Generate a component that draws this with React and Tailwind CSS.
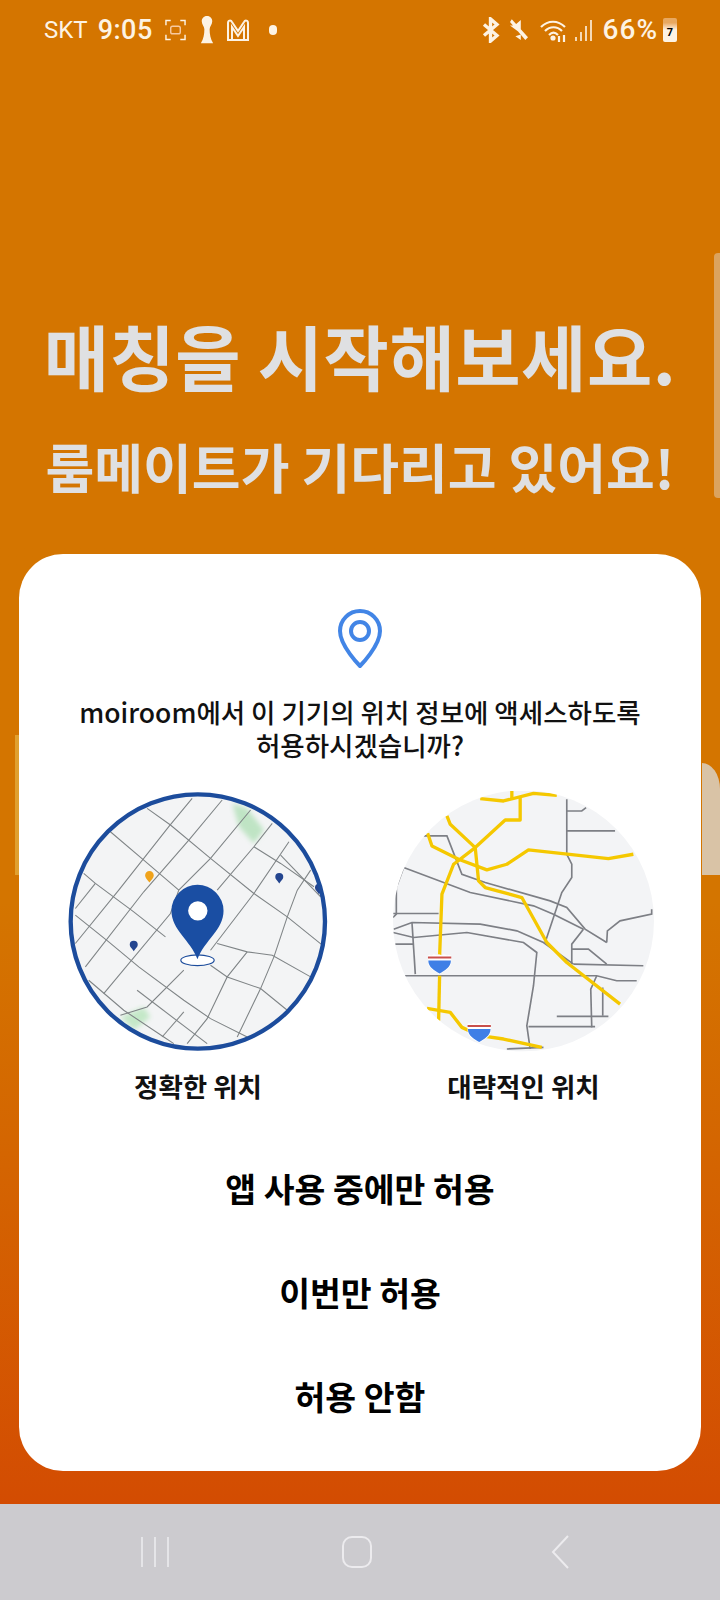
const ko = { fontFamily: '"Noto Sans CJK KR", "Noto Sans", sans-serif' }

function StatusBar() {
  return (
    <div className="h-[60px] pl-[44px] pr-[43px] flex items-center justify-between text-[#fdf3e4]" style={{ fontFamily: 'Roboto, sans-serif' }}>
      <div className="flex items-center">
        <span className="text-[24px]">SKT</span>
        <span className="font-medium ml-[10px] text-[27px] tracking-[0.5px]">9:05</span>
        <svg width="21" height="22" viewBox="0 0 22 22" fill="none" stroke="currentColor" strokeWidth="1.5" className="ml-[12px]">
          <path d="M1 6V1h5M16 1h5v5M21 16v5h-5M6 21H1v-5" />
          <rect x="6" y="7" width="10" height="8" rx="2" stroke="#f7c9a0" />
        </svg>
        <svg width="14" height="30" viewBox="0 0 16 34" fill="currentColor" className="ml-[14px]">
          <path d="M8 1c4 0 6 3 6 6 0 4-3 6-3 9 0 6 1 11 4 16H1c3-5 4-10 4-16 0-3-3-5-3-9 0-3 2-6 6-6z" />
        </svg>
        <svg width="25" height="24" viewBox="0 0 25 24" fill="none" stroke="currentColor" strokeWidth="2" className="ml-[12px]">
          <path d="M2 22V5c0-3 3-3 4-1l6 9 6-9c1-2 4-2 4 1v17zM6 22V9l6 9 6-9v13" />
        </svg>
        <span className="w-[8px] h-[10px] rounded-full bg-current ml-[18px]" />
      </div>
      <div className="flex items-center">
        <svg width="19" height="26" viewBox="0 0 18 28" fill="none" stroke="currentColor" strokeWidth="3.6" className="mr-[10px]">
          <path d="M2 8l14 12-7 6V2l7 6L2 20" />
        </svg>
        <svg width="18" height="24" viewBox="0 0 20 24" fill="currentColor" className="mr-[11px]">
          <path d="M0 7h5l7-6v15zM12 17v6l-6-4zM2 0l18 20-3 3L0 3z" />
        </svg>
        <svg width="29" height="26" viewBox="0 0 27 26" fill="none" stroke="currentColor" strokeWidth="2.2" className="mr-[6px]">
          <path d="M1 10c7-7 17-7 24 0M5 14c5-5 12-5 17 0M9 18c3-3 6-3 9 0" />
          <circle cx="13" cy="21" r="1.5" fill="currentColor" />
          <path d="M19 25v-6M24 18v7" />
        </svg>
        <svg width="18" height="26" viewBox="0 0 18 26" fill="none" stroke="currentColor" strokeWidth="1.6" className="mr-[11px]">
          <path d="M2 24v-4M7 24v-9M12 24V9M17 24V3" />
        </svg>
        <span className="font-medium text-[28px] tracking-[1px]">66%</span>
        <div className="w-[14px] h-[24px] ml-[5px] bg-gradient-to-b from-[#e8a860] from-[20%] to-[#fdf3e4] to-[50%] rounded-[2px] flex items-center justify-center text-black text-[11px] font-bold leading-none pt-[5px]">7</div>
      </div>
    </div>
  )
}

// drawn in crop coordinates, so the numbers read straight off the reference
function PreciseMap() {
  return (
    <svg width="262" height="262" viewBox="50 33 785 785">
      <defs>
        <clipPath id="precise-clip"><circle cx="442" cy="424" r="384" /></clipPath>
        <filter id="soft"><feGaussianBlur stdDeviation="8" /></filter>
      </defs>
      <circle cx="442" cy="424" r="384" fill="#f3f4f5" />
      <g clipPath="url(#precise-clip)">
        <path d="M545 70L590 85L640 150L610 190L565 140z" fill="#bfe4c4" filter="url(#soft)" />
        <path d="M210 710L280 680L300 710L250 750z" fill="#c4e8c8" filter="url(#soft)" />
        <g fill="none" stroke="#7f8486" strokeWidth="3.2">
          <path d="M290 85L360 135L480 235L610 340L710 410L815 495" />
          <path d="M425 55L355 140L205 330L75 490" />
          <path d="M135 310L75 385" />
          <path d="M515 60L415 180L280 335L105 560" />
          <path d="M600 90L480 235L385 330L360 400L160 640" />
          <path d="M665 130L610 200L500 330" />
          <path d="M715 185L610 340L480 510" />
          <path d="M180 155L280 240L385 330" />
          <path d="M100 280L135 310L250 395L345 470" />
          <path d="M75 405L175 485L265 560L400 660L480 715L590 770" />
          <path d="M115 600L220 690L340 770L370 790" />
          <path d="M260 630L470 790" />
          <path d="M500 490L590 515L665 525L780 590" />
          <path d="M590 515L530 590L470 715L410 790" />
          <path d="M480 555L530 590L630 625L710 690" />
          <path d="M780 270L740 330L710 410L670 530L630 625L560 770" />
          <path d="M690 225L810 350" />
          <path d="M610 200L690 250L790 320" />
          <path d="M400 695L335 770" />
          <path d="M400 570L290 680L210 705" />
        </g>
        <path d="M297 307C290 298 284 292 284 286a13 13 0 0 1 26 0C310 292 304 298 297 307z" fill="#f0a31c" />
        <path d="M686 310C679 301 674 297 674 291a12 12 0 0 1 24 0C698 297 693 301 686 310z" fill="#24458f" />
        <path d="M250 513C243 504 238 500 238 494a12 12 0 0 1 24 0C262 500 257 504 250 513z" fill="#24458f" />
        <path d="M805 342C798 333 793 329 793 323a12 12 0 0 1 24 0C817 329 812 333 805 342z" fill="#24458f" />
      </g>
      <circle cx="442" cy="424" r="381" fill="none" stroke="#1c4c9c" strokeWidth="13" />
      <ellipse cx="441" cy="540" rx="50" ry="16" fill="#ffffff" stroke="#1c4c9c" strokeWidth="3.5" />
      <path d="M441 537C420 480 363 450 363 392a78 78 0 0 1 156 0C519 450 462 480 441 537z" fill="#1a4ea3" />
      <circle cx="442" cy="392" r="29" fill="#ffffff" />
    </svg>
  )
}

function Shield({ x, y }) {
  return (
    <g transform={`translate(${x} ${y})`}>
      <path d="M-35 4C-30 -3 -26 8 -20 2C-15 -3 -10 7 -5 2C0 -3 5 7 10 2C15 -3 22 8 27 2L35 4V24C35 42 15 52 0 60C-15 52 -35 42 -35 24z" fill="#ffffff" />
      <path d="M-35 7H35V13H-35z" fill="#c9504c" />
      <path d="M-34 19H34C34 40 14 50 0 58C-14 50 -34 40 -34 19z" fill="#3f7fe6" />
    </g>
  )
}

function ApproxMap() {
  return (
    <svg width="263" height="263" viewBox="65 35 790 790">
      <defs>
        <clipPath id="approx-clip"><circle cx="460" cy="425" r="392" /></clipPath>
      </defs>
      <circle cx="460" cy="425" r="392" fill="#f3f4f6" />
      <g clipPath="url(#approx-clip)">
        <g fill="none" stroke="#7d7f85" strokeWidth="5">
          <path d="M590 60V225L605 255V295L575 340L525 490" />
          <path d="M590 95H635L648 85" />
          <path d="M590 155H735" />
          <path d="M160 170H230L275 285L345 310L540 365L590 385L645 450L710 490" />
          <path d="M100 265L300 340L490 380L550 405L640 450" />
          <path d="M100 265L78 325V405L68 415" />
          <path d="M68 403H205" />
          <path d="M70 450L125 430L330 435L440 455L520 490L610 555" />
          <path d="M68 460L130 475L290 460L460 490L500 520L490 620L470 740L480 810" />
          <path d="M125 430L135 585" />
          <path d="M75 495H130" />
          <path d="M100 590H680L740 605H800" />
          <path d="M610 555L820 560" />
          <path d="M605 510H655L710 555" />
          <path d="M640 450L605 495V555" />
          <path d="M680 590L662 630L665 745" />
          <path d="M698 625V710" />
          <path d="M560 712H715" />
          <path d="M475 743H675" />
          <path d="M410 810L520 805" />
          <path d="M710 490L712 455L750 425L845 405V390" />
        </g>
        <g fill="none" stroke="#f5c800" strokeWidth="10" strokeLinejoin="round">
          <path d="M330 58L400 65L490 42L560 48" />
          <path d="M425 35V62" />
          <path d="M450 55V122H405L315 205L250 255L215 345L208 530" />
          <path d="M208 590L205 725" />
          <path d="M230 110L240 135L315 205L325 305L345 325L455 355L530 490L590 550L750 675" />
          <path d="M172 162L185 200L265 240L350 272L410 255L475 212L715 238L790 225" />
          <path d="M170 688L240 700L275 745L330 770L400 780L515 805" />
        </g>
        <Shield x={208} y={525} />
        <Shield x={327} y={731} />
      </g>
    </svg>
  )
}

export default function App() {
  return (
    <div className="relative w-[720px] h-[1600px] flex flex-col overflow-hidden bg-[#cccbcf]">
      <div className="h-[1504px] flex flex-col bg-gradient-to-b from-[#d47500] from-[60%] to-[#d34c02]">
        <StatusBar />
        <div className="flex flex-col items-center text-[#dfe0e2] font-bold" style={ko}>
          <h1 className="mt-[254px] text-[71px] leading-[80px] tracking-[0.5px]">매칭을 시작해보세요.</h1>
          <p className="mt-[39px] text-[53px] leading-[66px]">룸메이트가 기다리고 있어요!</p>
        </div>
        <div className="mx-[19px] mt-[55px] h-[917px] bg-white rounded-[44px] flex flex-col items-center text-[#111] font-medium" style={ko}>
          <svg width="46" height="60" viewBox="0 0 46 60" fill="none" stroke="#4285e6" strokeWidth="4" className="mt-[55px]">
            <path d="M23 57C23 57 3 37 3 22a20 20 0 0 1 40 0C43 37 23 57 23 57z" strokeLinejoin="round" />
            <circle cx="23" cy="22" r="9" />
          </svg>
          <p className="mt-[26px] text-[26.5px] leading-[33px] text-center font-medium">
            moiroom에서 이 기기의 위치 정보에 액세스하도록
            <br />
            허용하시겠습니까?
          </p>
          <div className="self-stretch flex justify-between pl-[48px] pr-[46px] mt-[30px]">
            <div className="flex flex-col items-center">
              <PreciseMap />
              <span className="mt-[15px] text-[26.5px] leading-[36px] font-bold">정확한 위치</span>
            </div>
            <div className="flex flex-col items-center">
              <ApproxMap />
              <span className="mt-[14px] text-[26.5px] leading-[36px] font-semibold">대략적인 위치</span>
            </div>
          </div>
          <div className="flex flex-col items-center mt-[60px] text-[33.5px] leading-[48px] font-bold text-black gap-[56px]">
            <span>앱 사용 중에만 허용</span>
            <span>이번만 허용</span>
            <span>허용 안함</span>
          </div>
        </div>
      </div>
      <div className="flex-1 flex items-center pl-[140px] text-[#ecebee]">
        <svg width="30" height="32" viewBox="0 0 30 32" fill="none" stroke="currentColor" strokeWidth="1.6"><path d="M2 1v30M15 1v30M28 1v30" /></svg>
        <svg width="30" height="32" viewBox="0 0 30 32" fill="none" stroke="currentColor" strokeWidth="2" className="ml-[172px]"><rect x="1" y="1" width="28" height="30" rx="9" /></svg>
        <svg width="18" height="34" viewBox="0 0 18 34" fill="none" stroke="currentColor" strokeWidth="2" className="ml-[179px]"><path d="M17 1L2 17l15 16" /></svg>
      </div>
      {/* bits of the page behind the dialog that show at the edges */}
      <div className="absolute left-[714px] top-[253px] w-[6px] h-[245px] rounded-l-[4px] bg-[#dba35f]" />
      <div className="absolute left-[15px] top-[735px] w-[4px] h-[140px] bg-[#e0a030]" />
      <div className="absolute left-[702px] top-[763px] w-[18px] h-[112px] rounded-tr-[18px_26px] bg-[#d9c3a6]" />
    </div>
  )
}
